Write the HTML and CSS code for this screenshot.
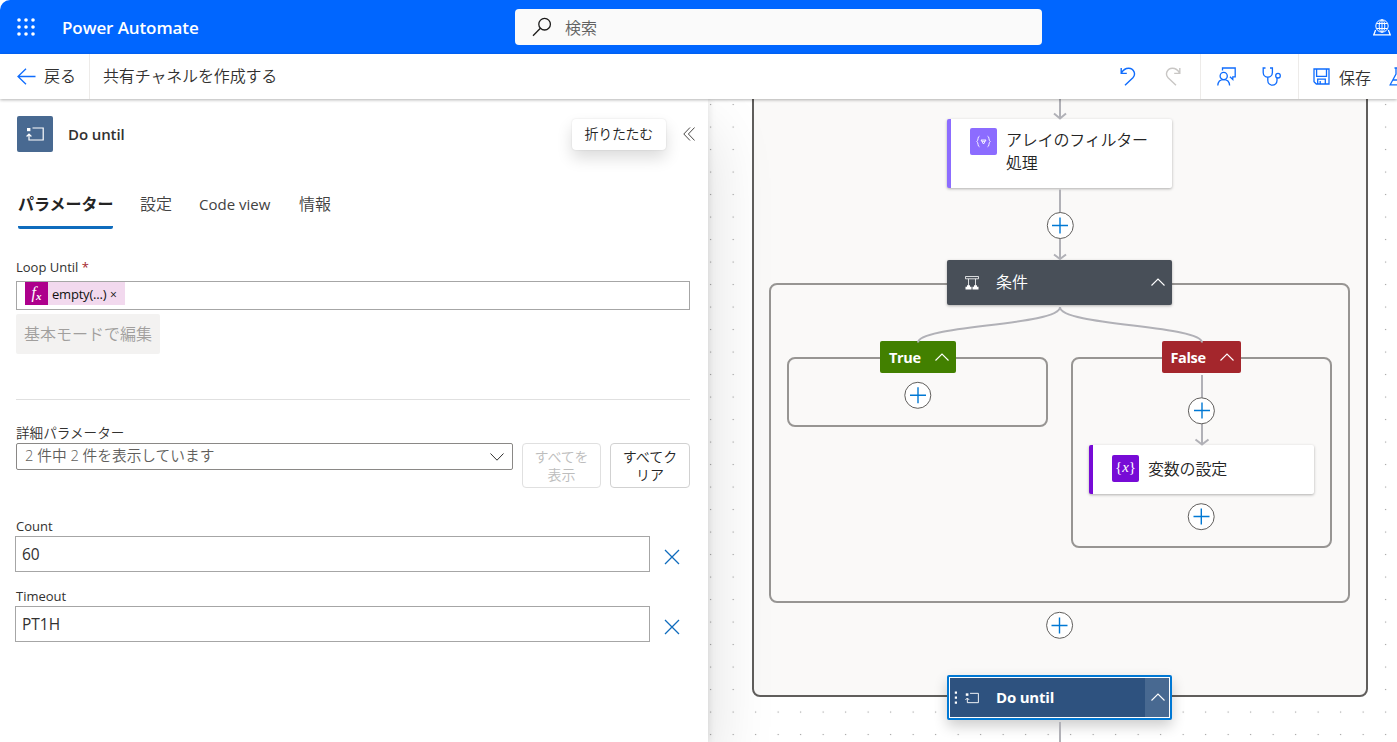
FILE: index.html
```html
<!DOCTYPE html>
<html lang="ja">
<head>
  <meta charset="UTF-8">
  <title>Power Automate</title>
  <meta name="viewport" content="width=device-width, initial-scale=1.0">
  <link rel="stylesheet" href="styles.css">
</head>
<body>
  <!-- ヘッダー -->
  <header class="header">
    <div class="header-left">
      <svg class="waffle" width="18" height="18" viewBox="0 0 18 18" fill="#fff">
        <circle cx="2" cy="2" r="1.8"/><circle cx="9" cy="2" r="1.8"/><circle cx="16" cy="2" r="1.8"/>
        <circle cx="2" cy="9" r="1.8"/><circle cx="9" cy="9" r="1.8"/><circle cx="16" cy="9" r="1.8"/>
        <circle cx="2" cy="16" r="1.8"/><circle cx="9" cy="16" r="1.8"/><circle cx="16" cy="16" r="1.8"/>
      </svg>
      <span class="app-name">Power Automate</span>
    </div>
    <div class="search">
      <svg width="20" height="20" viewBox="0 0 20 20" fill="none" stroke="#1b1a19" stroke-width="1.3">
        <circle cx="12.6" cy="7.2" r="5.8"/><path d="M8.4 11.3 1 18.8"/>
      </svg>
      <span>検索</span>
    </div>
    <div class="header-right">
      <svg width="18" height="17" viewBox="0 0 18 17" fill="none" stroke="#fff" stroke-width="1">
        <circle cx="9" cy="7" r="6.2"/><ellipse cx="9" cy="7" rx="2.8" ry="6.2"/>
        <path d="M9 .8v12.400M3.400 4.500h11.200M3.400 9.500h11.200"/>
        <path d="M2.600 11 .8 15.800h16.400L15.400 11" stroke-width="1.300"/>
      </svg>
    </div>
  </header>

  <!-- コマンドバー -->
  <div class="command-bar">
    <div class="back">
      <svg width="19" height="17" viewBox="0 0 19 17" fill="none" stroke="#0f6cfd" stroke-width="1.3">
        <path d="M18.5 8.5H1M9 .8 1 8.5l8 7.7"/>
      </svg>
      <span>戻る</span>
    </div>
    <div class="flow-name">共有チャネルを作成する</div>
    <div class="commands">
      <div class="command-group undo-group">
        <svg width="16" height="19" viewBox="0 0 16 19" fill="none" stroke="#0f6cfd" stroke-width="1.4">
          <path d="M1.2 1v5.4h5.6M1.3 6.2C3 3 5.500 1.200 8.700 1.200a5.700 5.700 0 0 1 4.200 9.600L5 18.300"/>
        </svg>
        <svg width="16" height="19" viewBox="0 0 16 19" fill="none" stroke="#c8c6c4" stroke-width="1.4">
          <path d="M14.800 1v5.400H9.200M14.700 6.200C13 3 10.500 1.200 7.300 1.200a5.700 5.700 0 0 0-4.200 9.600L11 18.300"/>
        </svg>
      </div>
      <div class="command-group check-group">
        <svg width="19" height="19" viewBox="0 0 19 19" fill="none" stroke="#0f6cfd" stroke-width="1.300">
          <path d="M5.500 3.500V1h12.700v8.800h-2.400v2.700l-2.900-2.700"/>
          <circle cx="6.700" cy="9" r="3.600"/>
          <path d="M.8 18.500c.2-3.700 2.500-5.800 5.900-5.800s5.700 2.100 5.900 5.800"/>
        </svg>
        <svg width="20" height="19" viewBox="0 0 20 19" fill="none" stroke="#0f6cfd" stroke-width="1.300">
          <path d="M3.500 1H1.200v4.500a4.600 4.600 0 0 0 9.200 0V1H8M5.800 10.200v3.400a4.600 4.600 0 0 0 9.200 0v-2.800"/>
          <circle cx="16" cy="8.700" r="2.300"/>
        </svg>
      </div>
      <div class="command-group save-group">
        <svg width="17" height="17" viewBox="0 0 17 17" fill="none" stroke="#0f6cfd" stroke-width="1.300">
          <path d="M1 1h15v15H3.300L1 13.700zM3.600 1v7.300h9.900V1M4.700 16v-4.800h7.600V16M7.200 13v3"/>
        </svg>
        <span>保存</span>
        <svg class="flask" width="19" height="19" viewBox="0 0 19 19" fill="none" stroke="#0f6cfd" stroke-width="1.300">
          <path d="M5.500 1h8M7 1v6L1.200 17.800h16.600L12 7V1M3.800 13h11.400"/>
        </svg>
      </div>
    </div>
  </div>

  <main class="designer">
    <!-- 設定パネル -->
    <section class="panel">
      <div class="panel-header">
        <div class="panel-icon">
          <svg width="18" height="14" viewBox="0 0 18 14" fill="none" stroke="#fff" stroke-width="1.200">
            <path d="M1 1h3.400v3.200H1z" fill="#fff" stroke="none"/>
            <path d="M6.500 1h10.700v12H3V7.500M.6 9.500 3 7l2.400 2.500"/>
          </svg>
        </div>
        <h2>Do until</h2>
        <div class="tooltip">折りたたむ</div>
        <svg class="collapse" width="12" height="14" viewBox="0 0 12 14" fill="none" stroke="#484644" stroke-width="1">
          <path d="M7 .5.800 7 7 13.500M11.600.500 5.400 7l6.200 6.500"/>
        </svg>
      </div>

      <nav class="tabs">
        <span class="tab active">パラメーター</span>
        <span class="tab">設定</span>
        <span class="tab latin">Code view</span>
        <span class="tab">情報</span>
      </nav>

      <div class="label">Loop Until <span class="required">*</span></div>
      <div class="token-input">
        <span class="token">
          <span class="token-icon"><i>f</i><sub>x</sub></span>
          <span class="token-text">empty(...)</span>
          <span class="token-close">×</span>
        </span>
      </div>
      <button class="basic-mode" disabled>基本モードで編集</button>

      <hr>

      <div class="label advanced-label">詳細パラメーター</div>
      <div class="advanced">
        <div class="dropdown">
          <span>2 件中 2 件を表示しています</span>
          <svg width="14" height="8" viewBox="0 0 14 8" fill="none" stroke="#323130"><path d="m.5.500 6.500 6.700L13.500.500"/></svg>
        </div>
        <button class="small-button" disabled>すべてを<br>表示</button>
        <button class="small-button clear">すべてク<br>リア</button>
      </div>

      <div class="label count-label">Count</div>
      <div class="field">
        <div class="text-input">60</div>
        <svg width="16" height="16" viewBox="0 0 16 16" stroke="#0f6cbd" stroke-width="1.300"><path d="m1 1 14 14M15 1 1 15"/></svg>
      </div>
      <div class="label timeout-label">Timeout</div>
      <div class="field">
        <div class="text-input">PT1H</div>
        <svg width="16" height="16" viewBox="0 0 16 16" stroke="#0f6cbd" stroke-width="1.300"><path d="m1 1 14 14M15 1 1 15"/></svg>
      </div>
    </section>

    <!-- フローキャンバス -->
    <section class="canvas">
      <div class="scope scope-outer"></div>
      <div class="scope scope-condition"></div>
      <div class="scope scope-true"></div>
      <div class="scope scope-false"></div>

      <div class="node card node-filter">
        <span class="node-icon">
          <svg width="27" height="27" viewBox="0 0 27 27" fill="none" stroke="#fff" stroke-width=".9">
            <path d="M9.500 8.200c-2 0-1 4.500-2.700 5.300 1.700.8.700 5.300 2.700 5.300M17.500 8.200c2 0 1 4.500 2.700 5.300-1.700.8-.7 5.300-2.700 5.300M11 12h5l-2.500 4zM12 13.300h3"/>
          </svg>
        </span>
        <span class="node-title">アレイのフィルター<br>処理</span>
      </div>

      <div class="node node-condition">
        <svg width="16" height="16" viewBox="0 0 16 16" fill="none" stroke="#fff" stroke-width=".8">
          <path d="M1.500 1.500h13v2.300h-13zM4.500 3.800v7M11.500 3.800v7"/>
          <path d="M3 10.200h3v1.600h1.500v2.700h-6v-2.700H3zM10 10.200h3v1.600h1.500v2.700h-6v-2.700H10z" fill="#fff" stroke="none"/>
        </svg>
        <span class="node-title">条件</span>
        <svg class="chevron" width="14" height="8" viewBox="0 0 14 8"><path d="M.5 7.500 7 1l6.500 6.500"/></svg>
      </div>

      <div class="node branch node-true">
        <span>True</span>
        <svg class="chevron" width="14" height="8" viewBox="0 0 14 8"><path d="M.5 7.500 7 1l6.500 6.500"/></svg>
      </div>
      <div class="node branch node-false">
        <span>False</span>
        <svg class="chevron" width="14" height="8" viewBox="0 0 14 8"><path d="M.5 7.500 7 1l6.500 6.500"/></svg>
      </div>

      <div class="node card node-variable">
        <span class="node-icon braces">{<i>x</i>}</span>
        <span class="node-title">変数の設定</span>
      </div>

      <div class="node node-until">
        <svg width="4" height="14" viewBox="0 0 4 14" fill="#fff"><path d="M.8 .5h2.200v2.200H.8zM.8 5.500h2.200v2.200H.8zM.8 10.500h2.200v2.200H.8z"/></svg>
        <svg class="until-icon" width="14" height="12" viewBox="0 0 18 14" fill="none" stroke="#fff" stroke-width="1.200">
          <path d="M1 1h3.400v3.200H1z" fill="#fff" stroke="none"/>
          <path d="M6.500 1h10.700v12H3V7.500M.6 9.500 3 7l2.400 2.500"/>
        </svg>
        <span class="node-title">Do until</span>
        <span class="until-toggle">
          <svg class="chevron" width="14" height="8" viewBox="0 0 14 8"><path d="M.5 7.500 7 1l6.500 6.500"/></svg>
        </span>
      </div>

      <!-- 接続線と追加ボタン -->
      <svg class="edges" width="689" height="643" viewBox="708 99 689 643" fill="none">
        <g stroke="#b1b1b7" stroke-width="2">
          <path d="M1060 99v19M1054 113.500l6 5 6-5"/>
          <path d="M1060 189.500V259M1054 254.500l6 4.500 6-4.500"/>
          <path d="M1060 307c0 19-142 18-142 35.500M1060 307c0 19 142 18 142 35.500"/>
          <path d="M1202 375v69M1195.500 439.500l6.500 5 6.500-5"/>
          <path d="M1060 722v20"/>
        </g>
        <g fill="#fff" stroke="#605e5c">
          <circle cx="1060.300" cy="225.500" r="13"/>
          <circle cx="917.800" cy="395.300" r="13"/>
          <circle cx="1201.400" cy="410.800" r="13"/>
          <circle cx="1201.200" cy="516.700" r="13"/>
          <circle cx="1059.600" cy="625.300" r="13"/>
        </g>
        <path stroke="#0078d4" stroke-width="1.400" d="M1052 225.500h16M1060 217.500v16M910 395.300h16M918 387.300v16M1194 410.500h16M1202 402.500v16M1193.500 516.500h16M1201.300 508.500v16M1051.500 625.500h16M1059.500 617.500v16"/>
      </svg>
    </section>
  </main>
</body>
</html>
```
FILE: styles.css
```css
:root {
  --blue: #0066ff;
  --accent: #0f6cbd;
  --text: #323130;
  --border: #a6a6a6;
}

* {
  box-sizing: border-box;
}

body {
  margin: 0;
  height: 100vh;
  overflow: hidden;
  display: flex;
  flex-direction: column;
  background: #fff;
  color: var(--text);
  font-family: 'Open Sans', 'Noto Sans CJK JP', sans-serif;
  font-size: 14px;
  font-weight: 350;
}

svg {
  flex: none;
}

button {
  font-family: inherit;
  font-weight: inherit;
}

/* ヘッダー */
.header {
  flex: none;
  height: 54px;
  display: flex;
  align-items: center;
  background: var(--blue);
  border-top-left-radius: 10px;
  color: #fff;
}

.header-left {
  width: 515px;
  display: flex;
  align-items: center;
  padding-left: 17px;
}

.waffle {
  margin-right: 27px;
}

.app-name {
  font-size: 17px;
  font-weight: 600;
  letter-spacing: -0.1px;
}

.search {
  width: 527px;
  height: 36px;
  display: flex;
  align-items: center;
  gap: 13px;
  padding-left: 17px;
  background: #fafafa;
  border-radius: 4px;
  color: #616161;
  font-size: 16px;
}

.header-right {
  margin-left: auto;
  padding-right: 6px;
  display: flex;
}

/* コマンドバー */
.command-bar {
  flex: none;
  height: 45px;
  display: flex;
  position: relative;
  z-index: 3;
  background: #fff;
  box-shadow: 0 1px 3px rgba(0, 0, 0, 0.3);
  font-size: 16px;
}

.back {
  width: 90px;
  display: flex;
  align-items: center;
  gap: 8px;
  padding-left: 17px;
  border-right: 1px solid #edebe9;
  line-height: 43px;
}

.flow-name {
  padding-left: 13px;
  line-height: 44px;
  letter-spacing: -0.15px;
}

.commands {
  margin-left: auto;
  display: flex;
}

.command-group {
  display: flex;
  align-items: center;
}

.undo-group {
  gap: 29px;
  padding-right: 19px;
}

.check-group {
  width: 99px;
  gap: 26px;
  padding-left: 16px;
  border-left: 1px solid #edebe9;
  border-right: 1px solid #edebe9;
}

.save-group {
  width: 98px;
  padding-left: 14px;
  overflow: hidden;
}

.save-group span {
  flex: none;
  margin: 0 18px 0 9px;
  white-space: nowrap;
}

/* レイアウト */
.designer {
  flex: 1;
  min-height: 0;
  display: flex;
}

.panel {
  flex: none;
  width: 708px;
  position: relative;
  z-index: 2;
  padding: 17px 18px 0 16px;
  background: #fff;
  box-shadow: 0 32px 64px rgba(0, 0, 0, 0.14), 0 0 8px rgba(0, 0, 0, 0.12);
}

.panel-header {
  display: flex;
  align-items: center;
  height: 36px;
}

.panel-icon {
  width: 36px;
  height: 36px;
  margin-left: 1px;
  display: flex;
  align-items: center;
  justify-content: center;
  background: #486991;
  border-radius: 2px;
}

.panel-header h2 {
  margin: 0 auto 0 15px;
  font-size: 15px;
  font-weight: 600;
  letter-spacing: -0.1px;
}

.tooltip {
  height: 31px;
  padding: 0 13px;
  line-height: 30px;
  background: #fff;
  border-radius: 4px;
  box-shadow: 0 0 2px rgba(0, 0, 0, 0.12), 0 8px 16px rgba(0, 0, 0, 0.14);
  color: #242424;
  letter-spacing: -0.3px;
}

.collapse {
  margin: 0 -5px 0 17px;
}

/* タブ */
.tabs {
  display: flex;
  gap: 27px;
  height: 48px;
  margin: 29px 0 0 2px;
  font-size: 16px;
  line-height: 46px;
  color: #424242;
}

.tab.active {
  width: 95px;
  border-bottom: 3px solid var(--accent);
  border-radius: 2px;
  color: #242424;
  font-weight: 700;
  white-space: nowrap;
}

.tab.latin {
  width: 73px;
  font-size: 15px;
  font-weight: 400;
  white-space: nowrap;
}

/* パラメーター */
.label {
  height: 20px;
  line-height: 20px;
  font-size: 13px;
  font-weight: 400;
}

.tabs + .label {
  margin-top: 28px;
}

.required {
  color: #a4262c;
}

.token-input {
  height: 29px;
  margin-top: 4px;
  padding-left: 8px;
  border: 1px solid var(--border);
}

.token {
  display: inline-flex;
  width: 100px;
  height: 23px;
  line-height: 25px;
  background: #f2d9ee;
  color: #111;
  font-weight: 400;
}

.token-icon {
  width: 23px;
  background: #ad008c;
  color: #fff;
  text-align: center;
  font-family: 'Liberation Serif', serif;
  font-size: 16px;
  font-style: italic;
  line-height: 22px;
}

.token-icon sub {
  font-size: 11px;
  font-weight: 700;
  line-height: 0;
  vertical-align: -2px;
}

.token-text {
  width: 55px;
  margin: 0 3px 0 4px;
  font-size: 13px;
  letter-spacing: -0.2px;
}

.token-close {
  font-size: 12px;
}

.basic-mode {
  display: block;
  width: 144px;
  height: 40px;
  margin-top: 4px;
  padding: 0 0 2px;
  border: 0;
  border-radius: 2px;
  background: #f3f2f1;
  color: #a19f9d;
  font-size: 16px;
}

hr {
  height: 1px;
  margin: 45px 0 0;
  border: 0;
  background: #e0e0e0;
}

.advanced-label {
  margin-top: 23px;
  font-size: 13.600px;
  font-weight: 350;
  line-height: 19px;
}

.advanced {
  display: flex;
  align-items: flex-start;
}

.dropdown {
  width: 497px;
  height: 27px;
  display: flex;
  align-items: center;
  justify-content: space-between;
  padding: 0 8px 3px;
  border: 1px solid #8a8886;
  border-radius: 2px;
  color: #605e5c;
  font-size: 14.700px;
  line-height: 20px;
}

.dropdown svg {
  margin-top: 3px;
}

.small-button {
  width: 79px;
  height: 45px;
  margin-left: 9px;
  padding: 0;
  border: 1px solid #e0e0e0;
  border-radius: 4px;
  background: #fff;
  color: #bdbdbd;
  font-size: 14px;
  line-height: 18px;
}

.small-button.clear {
  width: 80px;
  border-color: #d1d1d1;
  color: #242424;
}

.count-label {
  margin-top: 28px;
}

.timeout-label {
  margin-top: 14px;
}

.field {
  display: flex;
  align-items: center;
  gap: 14px;
  margin-left: -1px;
}

.text-input {
  width: 635px;
  height: 36px;
  padding-left: 6px;
  border: 1px solid var(--border);
  font-size: 15.500px;
  font-weight: 400;
  line-height: 35px;
}

.field svg {
  margin-top: 6px;
}

/* キャンバス */
.canvas {
  flex: 1;
  position: relative;
  overflow: hidden;
  background: #fff radial-gradient(circle, #999 0.700px, transparent 1px) -8.600px -5.700px / 22.500px 22.500px;
}

.scope {
  position: absolute;
  border: 2px solid #979593;
  border-radius: 8px;
}

.scope-outer {
  left: 43.500px;
  top: -20px;
  width: 616.500px;
  height: 618px;
  background: #faf9f8;
  border-color: #605e5c;
}

.scope-condition {
  left: 61px;
  top: 184px;
  width: 581px;
  height: 320px;
}

.scope-true {
  left: 79px;
  top: 258px;
  width: 261px;
  height: 70px;
}

.scope-false {
  left: 363px;
  top: 258px;
  width: 261px;
  height: 191px;
}

.edges {
  position: absolute;
  left: 0;
  top: 0;
}

/* ノード */
.node {
  position: absolute;
  display: flex;
  align-items: center;
  border-radius: 2px;
  box-shadow: 0 1px 3px rgba(0, 0, 0, 0.3);
  color: #fff;
}

.node-title {
  font-size: 16px;
  line-height: 23px;
}

.chevron {
  fill: none;
  stroke: #fff;
  stroke-width: 1.100;
  margin-top: -2px;
}

.card {
  width: 225px;
  background: #fff;
  border-left: 4px solid #8c6cff;
  color: #242424;
}

.card .node-title {
  letter-spacing: -0.2px;
}

.node-icon {
  flex: none;
  width: 27px;
  height: 27px;
  margin: 0 9px 0 19px;
  background: #8c6cff;
  border-radius: 2px;
}

.node-filter {
  left: 239px;
  top: 20px;
  height: 69px;
  padding-bottom: 3px;
}

.node-filter .node-icon {
  align-self: flex-start;
  margin-top: 9px;
}

.node-condition {
  left: 239px;
  top: 161px;
  width: 225px;
  height: 45px;
  padding: 0 7px 0 17px;
  background: #484f58;
}

.node-condition .node-title {
  margin: 0 auto 0 16px;
}

.branch {
  height: 32px;
  justify-content: space-between;
  padding: 0 7px 0 9px;
  box-shadow: none;
  font-size: 14.500px;
  font-weight: 700;
  letter-spacing: -0.35px;
}

.branch .chevron {
  margin-top: 0;
}

.node-true {
  left: 172px;
  top: 242px;
  width: 75.500px;
  background: #428000;
}

.node-false {
  left: 453.500px;
  top: 242px;
  width: 79.500px;
  background: #a4262c;
}

.node-variable {
  left: 381px;
  top: 346px;
  height: 49px;
  border-left-color: #770bd6;
}

.braces {
  margin-bottom: 3px;
  background: #770bd6;
  color: #fff;
  font-family: 'Liberation Serif', serif;
  font-size: 15px;
  line-height: 25px;
  text-align: center;
}

.node-until {
  left: 239px;
  top: 576px;
  width: 225px;
  height: 45px;
  padding-left: 5px;
  background: #2e527f;
  border: 2px solid #0078d4;
  box-shadow: inset 0 0 0 1px #fff, 0 6px 14px rgba(0, 0, 0, 0.2);
}

.until-icon {
  margin: 0 17px 0 7px;
}

.node-until .node-title {
  font-size: 15px;
  font-weight: 700;
  letter-spacing: -0.2px;
}

.until-toggle {
  width: 24px;
  height: 39px;
  padding-left: 2px;
  margin: 0 1px 0 auto;
  display: flex;
  align-items: center;
  justify-content: center;
  background: #486991;
}
```
